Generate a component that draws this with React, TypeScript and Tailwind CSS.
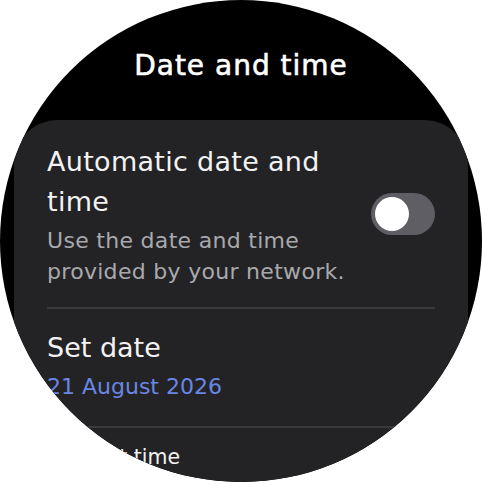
export default function App() {
  return (
    <div className="w-[482px] h-[482px] bg-white">
      <div
        className="w-[482px] h-[482px] rounded-full bg-black overflow-hidden flex flex-col"
        style={{ fontFamily: '"DejaVu Sans", "Noto Sans", sans-serif' }}
      >
        <h1 className="shrink-0 pt-[47px] h-[120px] text-center text-white text-[28px] leading-[38px] tracking-[1px] [-webkit-text-stroke:0.6px_white]">
          Date and time
        </h1>

        <div className="mx-[14px] flex-1 min-h-0 bg-[#232325] rounded-t-[44px] px-[33px] pt-[22px]">
          <div className="flex items-start gap-3">
            <div className="flex-1">
              <p className="text-[#f2f2f2] text-[27px] leading-[40px] tracking-[0.3px]">Automatic date and time</p>
              <p className="text-[#a9a9ad] text-[22px] leading-[31px] tracking-[0.3px] mt-[3px]">
                Use the date and time provided by your network.
              </p>
            </div>
            <div className="w-[64px] h-[42px] rounded-full bg-[#5f5e64] flex items-center p-[4px] mt-[51px] shrink-0">
              <span className="w-[34px] h-[34px] rounded-full bg-white" />
            </div>
          </div>

          <div className="h-[2px] bg-[#3a3a3e] mt-[20px]" />

          <div className="pt-[21px]">
            <p className="text-[#f2f2f2] text-[27px] leading-[36px]">Set date</p>
            <p className="text-[#6a86e4] text-[22px] leading-[30px] mt-[6px]">21 August 2026</p>
          </div>

          <div className="h-[2px] bg-[#3a3a3e] mt-[24px]" />

          <div className="scale-[0.76] origin-top pt-[20px]">
            <p className="text-[#f2f2f2] text-[27px] leading-[36px]">Set time</p>
          </div>
        </div>
      </div>
    </div>
  );
}
